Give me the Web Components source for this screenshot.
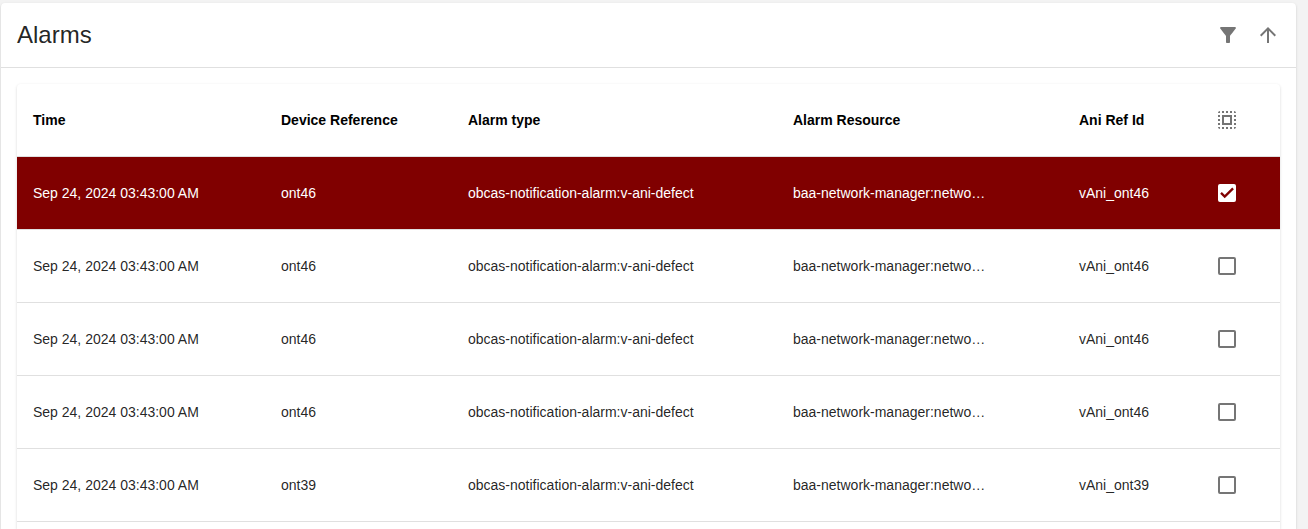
<!DOCTYPE html>
<html lang="en">
<head>
<meta charset="utf-8">
<title>Alarms</title>
<style>
  body {
    margin: 0;
    background: #f3f3f3;
    color: rgba(0, 0, 0, 0.87);
    font: 14px/20px "Liberation Sans", Arial, sans-serif;
  }
</style>
</head>
<body>
<panel-card>
  <span slot="title">Alarms</span>
  <icon-button slot="actions" icon="filter" label="Filter"></icon-button>
  <icon-button slot="actions" icon="up" label="Sort ascending"></icon-button>
  <alarm-table></alarm-table>
</panel-card>

<template id="panel-card">
  <style>
    :host {
      display: flex; flex-direction: column; box-sizing: border-box;
      min-height: calc(100vh - 3px);
      margin: 3px 12px 0 1px;
      background: #fff; border-radius: 4px 4px 0 0;
      box-shadow: 0 2px 1px -1px rgba(0,0,0,.2), 0 1px 1px rgba(0,0,0,.14), 0 1px 3px rgba(0,0,0,.12);
    }
    header {
      display: flex; align-items: center; gap: 16px;
      height: 64px; padding: 0 16px;
      border-bottom: 1px solid #e0e0e0;
    }
    h1 { flex: 1; margin: 0; font-size: 24px; line-height: 32px; font-weight: 400; }
    .content { flex: 1; display: flex; flex-direction: column; padding: 16px 16px 0; }
  </style>
  <header><h1><slot name="title"></slot></h1><slot name="actions"></slot></header>
  <div class="content"><slot></slot></div>
</template>

<template id="icon-button">
  <style>
    :host { display: inline-flex; color: #757575; }
    button { display: flex; margin: 0; padding: 0; border: 0; background: none; color: inherit; cursor: pointer; }
    svg { display: block; width: 24px; height: 24px; fill: currentColor; }
  </style>
  <button type="button"><svg viewBox="0 0 24 24" aria-hidden="true"><path/></svg></button>
</template>

<template id="check-box">
  <style>
    :host { display: inline-grid; width: 24px; height: 24px; place-items: center; }
    input, svg { grid-area: 1 / 1; }
    input {
      appearance: none; box-sizing: border-box; width: 18px; height: 18px; margin: 0;
      border: 2px solid #757575; border-radius: 2px; cursor: pointer;
    }
    input:checked { background: #fff; border-color: #fff; }
    svg { width: 14px; height: 14px; pointer-events: none; visibility: hidden; }
    input:checked + svg { visibility: visible; }
    path { fill: none; stroke: #800000; stroke-width: 4; }
  </style>
  <input type="checkbox">
  <svg viewBox="0 0 24 24" aria-hidden="true"><path d="M1.73 11.91 8.1 18.28 22.4 4"/></svg>
</template>

<template id="alarm-table">
  <style>
    :host {
      display: block; flex: 1; background: #fff; border-radius: 4px 4px 0 0;
      box-shadow: 0 1px 3px rgba(0,0,0,.16);
    }
    table { width: 100%; table-layout: fixed; border-collapse: separate; border-spacing: 0; }
    th, td {
      box-sizing: border-box; height: 73px; padding: 0 16px; text-align: left; vertical-align: middle;
      border-bottom: 1px solid #e0e0e0; white-space: nowrap; overflow: hidden; text-overflow: ellipsis;
    }
    th { color: #000; font-weight: 700; }
    th:last-child, td:last-child { padding: 0 13px; }
    .selected td { background: #800000 padding-box; color: #fff; }
    icon-button, check-box { vertical-align: top; }
    .time { width: 248px; } .device { width: 187px; } .type { width: 325px; }
    .resource { width: 286px; } .ani { width: 139px; } .select { width: 78px; }
  </style>
  <table>
    <colgroup><col class="time"><col class="device"><col class="type"><col class="resource"><col class="ani"><col class="select"></colgroup>
    <thead><tr>
      <th scope="col">Time</th><th scope="col">Device Reference</th><th scope="col">Alarm type</th>
      <th scope="col">Alarm Resource</th><th scope="col">Ani Ref Id</th>
      <th scope="col"><icon-button icon="all" label="Select all"></icon-button></th>
    </tr></thead>
    <tbody></tbody>
  </table>
</template>

<script>
  const ICONS = {
    filter: "M4.25 5.61C6.27 8.2 10 13 10 13v6c0 .55.45 1 1 1h2c.55 0 1-.45 1-1v-6s3.72-4.8 5.74-7.39A.998.998 0 0 0 18.95 4H5.04c-.83 0-1.3.95-.79 1.61z",
    up: "M4 12l1.41 1.41L11 7.83V20h2V7.83l5.58 5.59L20 12l-8-8-8 8z",
    all: "M3 5h2V3c-1.1 0-2 .9-2 2zm0 8h2v-2H3v2zm4 8h2v-2H7v2zM3 9h2V7H3v2zm10-6h-2v2h2V3zm6 0v2h2c0-1.1-.9-2-2-2zM5 21v-2H3c0 1.1.9 2 2 2zm-2-4h2v-2H3v2zM9 3H7v2h2V3zm2 18h2v-2h-2v2zm8-8h2v-2h-2v2zm0 8c1.1 0 2-.9 2-2h-2v2zm0-12h2V7h-2v2zm0 8h2v-2h-2v2zm-4 4h2v-2h-2v2zm0-16h2V3h-2v2zM7 17h10V7H7v10zm2-8h6v6H9V9z"
  };

  class Base extends HTMLElement {
    constructor() {
      super();
      this.attachShadow({ mode: "open" })
        .append(document.getElementById(this.localName).content.cloneNode(true));
    }
  }

  class PanelCard extends Base {}

  class IconButton extends Base {
    connectedCallback() {
      this.shadowRoot.querySelector("path").setAttribute("d", ICONS[this.getAttribute("icon")]);
      this.shadowRoot.querySelector("button").setAttribute("aria-label", this.getAttribute("label"));
    }
  }

  class CheckBox extends Base {
    connectedCallback() {
      const input = this.shadowRoot.querySelector("input");
      input.checked = this.hasAttribute("checked");
      input.setAttribute("aria-label", this.getAttribute("label"));
      input.addEventListener("change", () =>
        this.dispatchEvent(new CustomEvent("toggle-row", { detail: input.checked })));
    }
  }

  class AlarmTable extends Base {
    connectedCallback() {
      const body = this.shadowRoot.querySelector("tbody");
      ["46", "46", "46", "46", "39"].forEach((id, i) => {
        const row = body.insertRow();
        const values = ["Sep 24, 2024 03:43:00 AM", `ont${id}`, "obcas-notification-alarm:v-ani-defect",
          "baa-network-manager:netwo…", `vAni_ont${id}`];
        for (const value of values) row.insertCell().textContent = value;
        const box = document.createElement("check-box");
        box.setAttribute("label", `Select alarm ${i + 1}`);
        box.toggleAttribute("checked", i === 0);
        row.classList.toggle("selected", i === 0);
        box.addEventListener("toggle-row", e => row.classList.toggle("selected", e.detail));
        row.insertCell().append(box);
      });
    }
  }

  customElements.define("icon-button", IconButton);
  customElements.define("check-box", CheckBox);
  customElements.define("alarm-table", AlarmTable);
  customElements.define("panel-card", PanelCard);
</script>
</body>
</html>
